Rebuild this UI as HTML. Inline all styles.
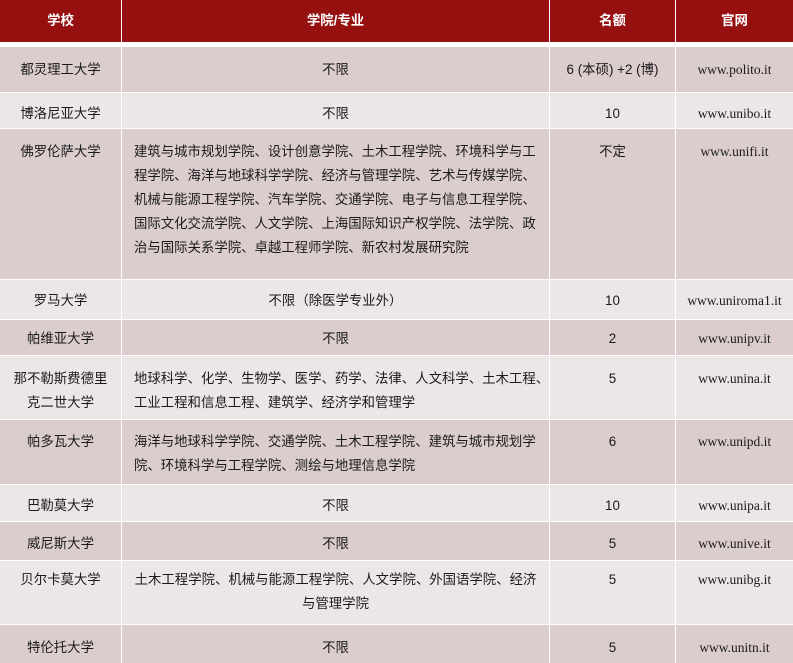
<!DOCTYPE html>
<html><head><meta charset="utf-8"><style>
body{margin:0;width:793px;height:663px;overflow:hidden;background:#fff;font-family:"Liberation Sans","Noto Sans CJK SC",sans-serif;font-size:13.4px;color:#1a1a1a}
.r{position:absolute;left:0;width:793px}
.c{position:absolute;top:0;bottom:0;box-sizing:border-box;line-height:24px;text-align:center}
.c1{left:0;width:121px}
.c2{left:122px;width:427px;padding:0 12px}
.c3{left:550px;width:125px}
.c4{left:676px;width:117px;font-family:"Liberation Serif",serif;font-size:13.5px}
.d{background:#dbcdcd}.l{background:#ede6e6}
.h .c{background:#961010;color:#fff;font-weight:bold;line-height:42px}
.L{text-align:left}
</style></head><body>
<div class="r h" style="top:0;height:42px"><div class="c c1">学校</div><div class="c c2">学院/专业</div><div class="c c3">名额</div><div class="c c4" style="font-family:'Liberation Sans','Noto Sans CJK SC',sans-serif;font-size:13.4px">官网</div></div>

<div class="r" style="top:47px;height:45px"><div class="c c1 d" style="padding-top:11px">都灵理工大学</div><div class="c c2 d" style="padding-top:11px">不限</div><div class="c c3 d" style="padding-top:11px">6 (本硕) +2 (博)</div><div class="c c4 d" style="padding-top:11px">www.polito.it</div></div>

<div class="r" style="top:93px;height:35px"><div class="c c1 l" style="padding-top:9px">博洛尼亚大学</div><div class="c c2 l" style="padding-top:9px">不限</div><div class="c c3 l" style="padding-top:9px">10</div><div class="c c4 l" style="padding-top:9px">www.unibo.it</div></div>

<div class="r" style="top:129px;height:150px"><div class="c c1 d" style="padding-top:11px">佛罗伦萨大学</div><div class="c c2 d L" style="padding-top:11px">建筑与城市规划学院、设计创意学院、土木工程学院、环境科学与工程学院、海洋与地球科学学院、经济与管理学院、艺术与传媒学院、机械与能源工程学院、汽车学院、交通学院、电子与信息工程学院、国际文化交流学院、人文学院、上海国际知识产权学院、法学院、政治与国际关系学院、卓越工程师学院、新农村发展研究院</div><div class="c c3 d" style="padding-top:11px">不定</div><div class="c c4 d" style="padding-top:11px">www.unifi.it</div></div>

<div class="r" style="top:280px;height:39px"><div class="c c1 l" style="padding-top:9px">罗马大学</div><div class="c c2 l" style="padding-top:9px">不限（除医学专业外）</div><div class="c c3 l" style="padding-top:9px">10</div><div class="c c4 l" style="padding-top:9px">www.uniroma1.it</div></div>

<div class="r" style="top:320px;height:35px"><div class="c c1 d" style="padding-top:7px">帕维亚大学</div><div class="c c2 d" style="padding-top:7px">不限</div><div class="c c3 d" style="padding-top:7px">2</div><div class="c c4 d" style="padding-top:7px">www.unipv.it</div></div>

<div class="r" style="top:356px;height:63px"><div class="c c1 l" style="padding:11px 10px 0">那不勒斯费德里克二世大学</div><div class="c c2 l L" style="padding:11px 0 0 12px;white-space:nowrap;overflow:hidden">地球科学、化学、生物学、医学、药学、法律、人文科学、土木工程、<br>工业工程和信息工程、建筑学、经济学和管理学</div><div class="c c3 l" style="padding-top:11px">5</div><div class="c c4 l" style="padding-top:11px">www.unina.it</div></div>

<div class="r" style="top:420px;height:64px"><div class="c c1 d" style="padding-top:10px">帕多瓦大学</div><div class="c c2 d L" style="padding-top:10px">海洋与地球科学学院、交通学院、土木工程学院、建筑与城市规划学院、环境科学与工程学院、测绘与地理信息学院</div><div class="c c3 d" style="padding-top:10px">6</div><div class="c c4 d" style="padding-top:10px">www.unipd.it</div></div>

<div class="r" style="top:485px;height:36px"><div class="c c1 l" style="padding-top:9px">巴勒莫大学</div><div class="c c2 l" style="padding-top:9px">不限</div><div class="c c3 l" style="padding-top:9px">10</div><div class="c c4 l" style="padding-top:9px">www.unipa.it</div></div>

<div class="r" style="top:522px;height:38px"><div class="c c1 d" style="padding-top:10px">威尼斯大学</div><div class="c c2 d" style="padding-top:10px">不限</div><div class="c c3 d" style="padding-top:10px">5</div><div class="c c4 d" style="padding-top:10px">www.unive.it</div></div>

<div class="r" style="top:561px;height:63px"><div class="c c1 l" style="padding-top:7px">贝尔卡莫大学</div><div class="c c2 l" style="padding-top:7px">土木工程学院、机械与能源工程学院、人文学院、外国语学院、经济与管理学院</div><div class="c c3 l" style="padding-top:7px">5</div><div class="c c4 l" style="padding-top:7px">www.unibg.it</div></div>

<div class="r" style="top:625px;height:38px"><div class="c c1 d" style="padding-top:11px">特伦托大学</div><div class="c c2 d" style="padding-top:11px">不限</div><div class="c c3 d" style="padding-top:11px">5</div><div class="c c4 d" style="padding-top:11px">www.unitn.it</div></div>
</body></html>
